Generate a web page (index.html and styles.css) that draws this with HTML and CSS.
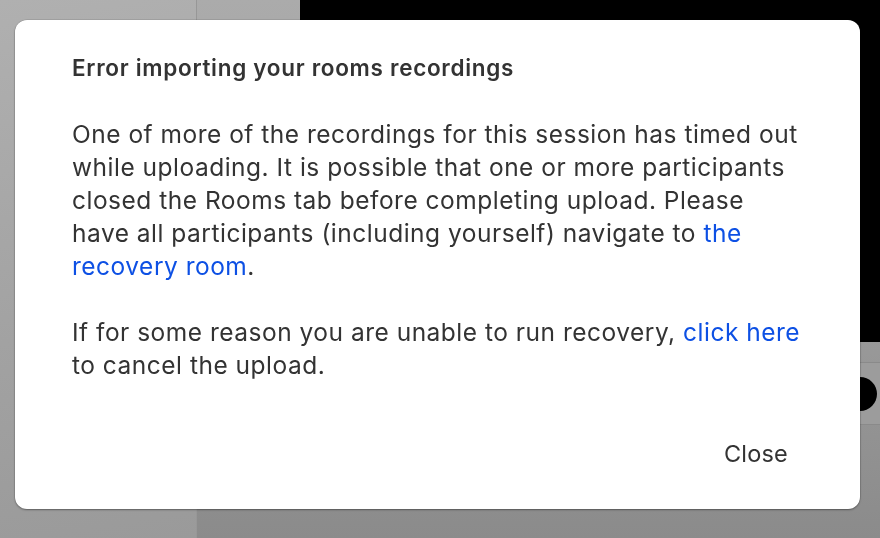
FILE: index.html
```html
<!DOCTYPE html>
<html lang="en">
<head>
<meta charset="utf-8">
<title>Error importing your rooms recordings</title>
<link rel="stylesheet" href="styles.css">
</head>
<body>
<div class="app">
  <aside class="sidebar"></aside>
  <main class="stage">
    <div class="stage-top">
      <div class="gap"></div>
      <div class="video"></div>
    </div>
    <div class="toolbar">
      <div class="toolbar-inner">
        <span class="dot"></span>
      </div>
    </div>
  </main>
</div>

<div class="modal" role="dialog" aria-labelledby="modal-title">
  <h1 id="modal-title" class="modal-title">Error importing your rooms recordings</h1>
  <p class="modal-text">One of more of the recordings for this session has timed out while uploading. It is possible that one or more participants closed the Rooms tab before completing upload. Please have all participants (including yourself) navigate to <a class="link" href="#">the recovery room</a>.</p>
  <p class="modal-text">If for some reason you are unable to run recovery, <a class="link" href="#">click here</a> to cancel the upload.</p>
  <div class="modal-actions">
    <button class="btn-close" type="button">Close</button>
  </div>
</div>
</body>
</html>
```

FILE: styles.css
```css
* { box-sizing: border-box; }

html, body {
  margin: 0;
  height: 100%;
}

body {
  font-family: Inter, "Noto Sans", "Liberation Sans", sans-serif;
  background: linear-gradient(180deg, #ababab 0%, #9a9a9a 60%, #8b8b8b 100%);
  overflow: hidden;
}

.app {
  display: flex;
  height: 538px;
}

.sidebar {
  width: 197px;
  flex: none;
  border-right: 1px solid #979797;
  background: linear-gradient(170deg, #b0b0b0 0%, #a2a2a2 60%, #9a9a9a 100%);
}

.stage {
  flex: 1;
  display: flex;
  flex-direction: column;
}

.stage-top {
  display: flex;
  height: 342px;
}

.gap { width: 103px; flex: none; }

.video {
  flex: 1;
  background: #000;
}

.toolbar {
  padding-top: 20px;
}

.toolbar-inner {
  height: 63px;
  border-top: 1px solid #8a8a8a;
  border-bottom: 1px solid #8a8a8a;
  background: #9c9c9c;
  display: flex;
  align-items: center;
  justify-content: flex-end;
  padding-right: 3px;
}

.dot {
  width: 34px;
  height: 34px;
  border-radius: 50%;
  background: #000;
}

.modal {
  position: fixed;
  left: 15px;
  top: 20px;
  width: 845px;
  height: 489px;
  background: #fff;
  border-radius: 12px;
  box-shadow: 0 1px 2px rgba(0,0,0,0.35), 0 0 0 0.5px rgba(0,0,0,0.15);
  padding: 36px 57px 0 57px;
  color: #333;
  display: flex;
  flex-direction: column;
}

.modal-title {
  margin: 0;
  font-size: 22.5px;
  font-weight: 600;
  line-height: 24px;
  letter-spacing: 0.7px;
  color: #333;
}

.modal-text {
  margin: 38px 0 0 0;
  font-size: 24.5px;
  line-height: 33px;
  letter-spacing: 0.5px;
  color: #333;
}

.modal-text + .modal-text { margin-top: 33px; }

.link {
  color: #0d50e4;
  text-decoration: none;
}

.modal-actions {
  display: flex;
  justify-content: flex-end;
  margin-top: 52px;
  margin-right: 15px;
}

.btn-close {
  font-family: inherit;
  font-size: 23.5px;
  letter-spacing: 0.2px;
  color: #333;
  background: none;
  border: none;
  padding: 6px 0;
  line-height: 28px;
  cursor: pointer;
}
```
